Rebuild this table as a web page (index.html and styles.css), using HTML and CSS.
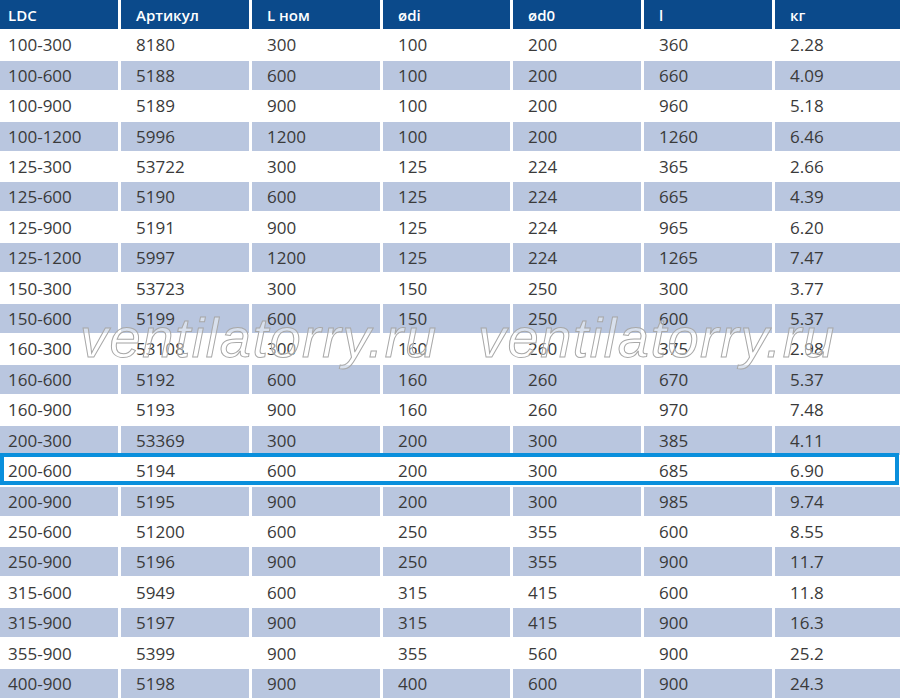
FILE: index.html
```html
<!DOCTYPE html>
<html lang="ru">
<head>
<meta charset="utf-8">
<title>LDC</title>
<link rel="stylesheet" href="styles.css">
</head>
<body>
<div class="sheet">
  <div class="grid">
    <div class="row head"><span>LDC</span><span>Артикул</span><span>L ном</span><span>ødi</span><span>ød0</span><span>l</span><span>кг</span></div>
    <div class="row"><span>100-300</span><span>8180</span><span>300</span><span>100</span><span>200</span><span>360</span><span>2.28</span></div>
    <div class="row alt"><span>100-600</span><span>5188</span><span>600</span><span>100</span><span>200</span><span>660</span><span>4.09</span></div>
    <div class="row"><span>100-900</span><span>5189</span><span>900</span><span>100</span><span>200</span><span>960</span><span>5.18</span></div>
    <div class="row alt"><span>100-1200</span><span>5996</span><span>1200</span><span>100</span><span>200</span><span>1260</span><span>6.46</span></div>
    <div class="row"><span>125-300</span><span>53722</span><span>300</span><span>125</span><span>224</span><span>365</span><span>2.66</span></div>
    <div class="row alt"><span>125-600</span><span>5190</span><span>600</span><span>125</span><span>224</span><span>665</span><span>4.39</span></div>
    <div class="row"><span>125-900</span><span>5191</span><span>900</span><span>125</span><span>224</span><span>965</span><span>6.20</span></div>
    <div class="row alt"><span>125-1200</span><span>5997</span><span>1200</span><span>125</span><span>224</span><span>1265</span><span>7.47</span></div>
    <div class="row"><span>150-300</span><span>53723</span><span>300</span><span>150</span><span>250</span><span>300</span><span>3.77</span></div>
    <div class="row alt"><span>150-600</span><span>5199</span><span>600</span><span>150</span><span>250</span><span>600</span><span>5.37</span></div>
    <div class="row"><span>160-300</span><span>53108</span><span>300</span><span>160</span><span>260</span><span>375</span><span>2.98</span></div>
    <div class="row alt"><span>160-600</span><span>5192</span><span>600</span><span>160</span><span>260</span><span>670</span><span>5.37</span></div>
    <div class="row"><span>160-900</span><span>5193</span><span>900</span><span>160</span><span>260</span><span>970</span><span>7.48</span></div>
    <div class="row alt"><span>200-300</span><span>53369</span><span>300</span><span>200</span><span>300</span><span>385</span><span>4.11</span></div>
    <div class="row"><span>200-600</span><span>5194</span><span>600</span><span>200</span><span>300</span><span>685</span><span>6.90</span></div>
    <div class="row alt"><span>200-900</span><span>5195</span><span>900</span><span>200</span><span>300</span><span>985</span><span>9.74</span></div>
    <div class="row"><span>250-600</span><span>51200</span><span>600</span><span>250</span><span>355</span><span>600</span><span>8.55</span></div>
    <div class="row alt"><span>250-900</span><span>5196</span><span>900</span><span>250</span><span>355</span><span>900</span><span>11.7</span></div>
    <div class="row"><span>315-600</span><span>5949</span><span>600</span><span>315</span><span>415</span><span>600</span><span>11.8</span></div>
    <div class="row alt"><span>315-900</span><span>5197</span><span>900</span><span>315</span><span>415</span><span>900</span><span>16.3</span></div>
    <div class="row"><span>355-900</span><span>5399</span><span>900</span><span>355</span><span>560</span><span>900</span><span>25.2</span></div>
    <div class="row alt"><span>400-900</span><span>5198</span><span>900</span><span>400</span><span>600</span><span>900</span><span>24.3</span></div>
  </div>
  <div class="highlight"></div>
  <div class="watermark wm-left">ventilatorry.ru</div>
  <div class="watermark wm-right">ventilatorry.ru</div>
</div>
</body>
</html>
```
FILE: styles.css
```css
html, body {
  margin: 0;
  padding: 0;
  background: #ffffff;
}

.sheet {
  position: relative;
  width: 900px;
  height: 698px;
  overflow: hidden;
  font-family: "Open Sans", "Liberation Sans", sans-serif;
}

.grid {
  display: grid;
  grid-template-columns: 118px 128px 128px 127px 128px 128px 125px;
  grid-template-rows: repeat(23, 1fr);
  column-gap: 3px;
  row-gap: 1.5px;
  height: 698px;
}

.row {
  display: contents;
}

.row span {
  display: flex;
  align-items: center;
  padding-left: 15px;
  font-size: 17px;
  color: #3a3a3a;
  white-space: nowrap;
}

.row span:first-child {
  padding-left: 8px;
}

.row.alt span {
  background: #b9c6df;
}

.row.head span {
  background: #0b4a8b;
  color: #ffffff;
  font-size: 15px;
  font-weight: 600;
  padding-top: 2px;
}

.highlight {
  position: absolute;
  top: 453px;
  left: 0;
  width: 899px;
  height: 32px;
  box-sizing: border-box;
  border: 4px solid #0a8fdc;
  pointer-events: none;
}

.watermark {
  position: absolute;
  top: 305px;
  font-family: "Liberation Sans", Arial, sans-serif;
  font-style: italic;
  font-size: 56px;
  letter-spacing: 1.5px;
  color: rgba(255, 255, 255, 0.45);
  -webkit-text-stroke: 1px #a8a8a8;
  white-space: nowrap;
  pointer-events: none;
}

.wm-left {
  left: 80px;
}

.wm-right {
  left: 478px;
}
```
